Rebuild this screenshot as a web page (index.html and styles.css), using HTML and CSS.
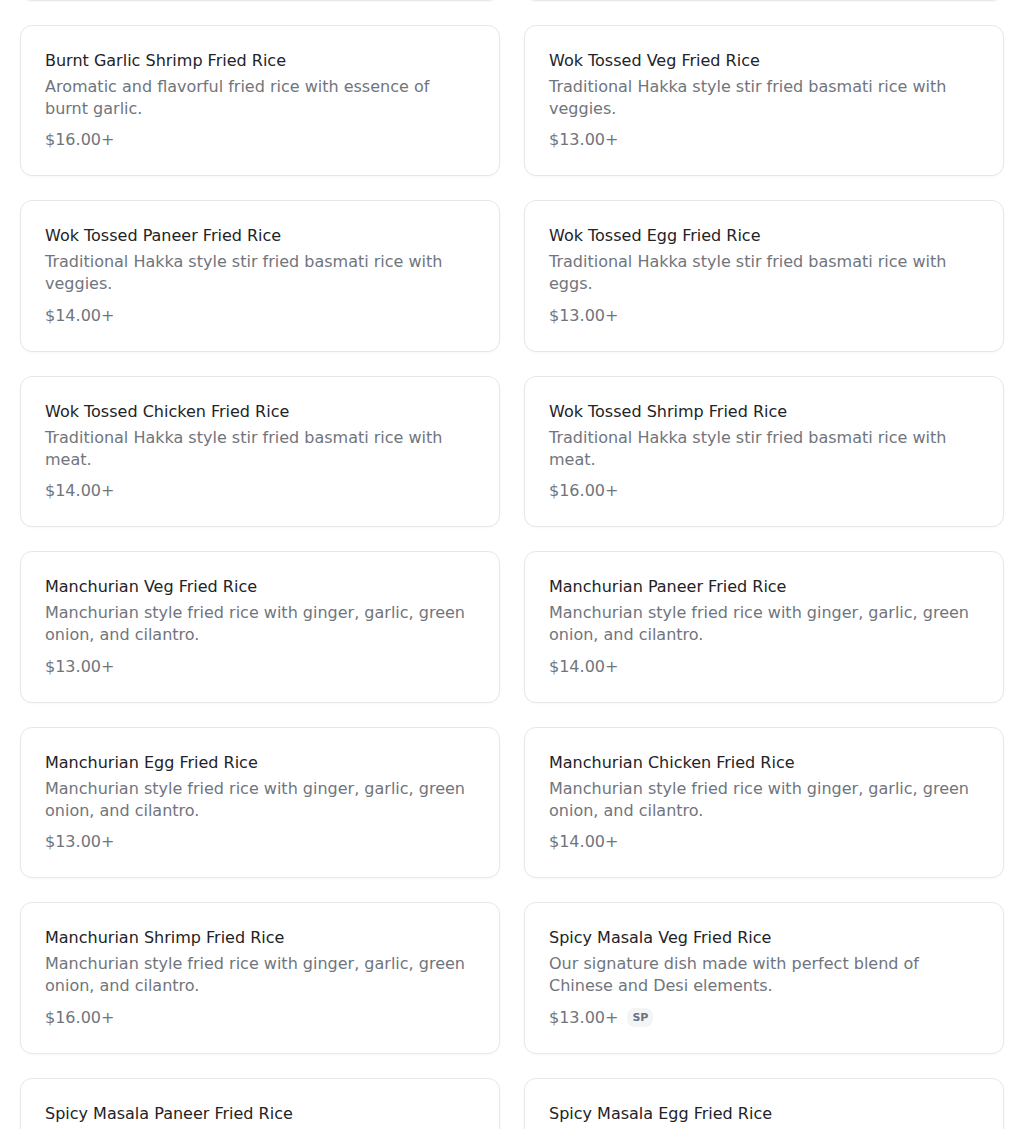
FILE: index.html
```html
<!DOCTYPE html>
<html lang="en">
<head>
<meta charset="utf-8">
<title>Fried Rice</title>
<link rel="stylesheet" href="styles.css">
</head>
<body>
<main class="menu">
  <div class="grid">
    <div class="card"><h3 class="name">Burnt Garlic Chicken Fried Rice</h3><p class="desc">Aromatic and flavorful fried rice with essence of burnt garlic.</p><div class="price-row"><span class="price">$14.00+</span></div></div>
    <div class="card"><h3 class="name">Burnt Garlic Egg Fried Rice</h3><p class="desc">Aromatic and flavorful fried rice with essence of burnt garlic.</p><div class="price-row"><span class="price">$13.00+</span></div></div>

    <div class="card"><h3 class="name">Burnt Garlic Shrimp Fried Rice</h3><p class="desc">Aromatic and flavorful fried rice with essence of burnt garlic.</p><div class="price-row"><span class="price">$16.00+</span></div></div>
    <div class="card"><h3 class="name">Wok Tossed Veg Fried Rice</h3><p class="desc">Traditional Hakka style stir fried basmati rice with veggies.</p><div class="price-row"><span class="price">$13.00+</span></div></div>

    <div class="card"><h3 class="name">Wok Tossed Paneer Fried Rice</h3><p class="desc">Traditional Hakka style stir fried basmati rice with veggies.</p><div class="price-row"><span class="price">$14.00+</span></div></div>
    <div class="card"><h3 class="name">Wok Tossed Egg Fried Rice</h3><p class="desc">Traditional Hakka style stir fried basmati rice with eggs.</p><div class="price-row"><span class="price">$13.00+</span></div></div>

    <div class="card"><h3 class="name">Wok Tossed Chicken Fried Rice</h3><p class="desc">Traditional Hakka style stir fried basmati rice with meat.</p><div class="price-row"><span class="price">$14.00+</span></div></div>
    <div class="card"><h3 class="name">Wok Tossed Shrimp Fried Rice</h3><p class="desc">Traditional Hakka style stir fried basmati rice with meat.</p><div class="price-row"><span class="price">$16.00+</span></div></div>

    <div class="card"><h3 class="name">Manchurian Veg Fried Rice</h3><p class="desc">Manchurian style fried rice with ginger, garlic, green onion, and cilantro.</p><div class="price-row"><span class="price">$13.00+</span></div></div>
    <div class="card"><h3 class="name">Manchurian Paneer Fried Rice</h3><p class="desc">Manchurian style fried rice with ginger, garlic, green onion, and cilantro.</p><div class="price-row"><span class="price">$14.00+</span></div></div>

    <div class="card"><h3 class="name">Manchurian Egg Fried Rice</h3><p class="desc">Manchurian style fried rice with ginger, garlic, green onion, and cilantro.</p><div class="price-row"><span class="price">$13.00+</span></div></div>
    <div class="card"><h3 class="name">Manchurian Chicken Fried Rice</h3><p class="desc">Manchurian style fried rice with ginger, garlic, green onion, and cilantro.</p><div class="price-row"><span class="price">$14.00+</span></div></div>

    <div class="card"><h3 class="name">Manchurian Shrimp Fried Rice</h3><p class="desc">Manchurian style fried rice with ginger, garlic, green onion, and cilantro.</p><div class="price-row"><span class="price">$16.00+</span></div></div>
    <div class="card"><h3 class="name">Spicy Masala Veg Fried Rice</h3><p class="desc">Our signature dish made with perfect blend of Chinese and Desi elements.</p><div class="price-row"><span class="price">$13.00+</span><span class="badge">SP</span></div></div>

    <div class="card"><h3 class="name">Spicy Masala Paneer Fried Rice</h3><p class="desc">Our signature dish made with perfect blend of Chinese and Desi elements.</p><div class="price-row"><span class="price">$14.00+</span><span class="badge">SP</span></div></div>
    <div class="card"><h3 class="name">Spicy Masala Egg Fried Rice</h3><p class="desc">Our signature dish made with perfect blend of Chinese and Desi elements.</p><div class="price-row"><span class="price">$13.00+</span><span class="badge">SP</span></div></div>
  </div>
</main>
</body>
</html>
```
FILE: styles.css
```css
html, body {
  margin: 0;
  padding: 0;
  background: #ffffff;
  font-family: "DejaVu Sans", "Noto Sans", sans-serif;
}

.menu {
  padding: 0 20px;
  margin-top: -150.75px;
}

.grid {
  display: grid;
  grid-template-columns: 1fr 1fr;
  column-gap: 24px;
  row-gap: 24px;
}

.card {
  border: 1px solid #e5e7eb;
  border-radius: 12px;
  padding: 24px 24px 23px;
  background: #fff;
  box-shadow: 0 1px 2px rgba(0, 0, 0, 0.03);
}

.name {
  margin: 0;
  font-size: 16px;
  line-height: 22px;
  font-weight: 400;
  color: #222327;
}

.desc {
  margin: 4px 0 0;
  font-size: 16px;
  line-height: 22px;
  color: #70757d;
}

.price-row {
  display: flex;
  align-items: center;
  margin-top: 8.5px;
  height: 24px;
}

.price {
  font-size: 16px;
  line-height: 24px;
  color: #70757d;
}

.badge {
  margin-left: 9px;
  padding: 2px 5px;
  border-radius: 8px;
  background: #f3f4f6;
  color: #6b7280;
  font-size: 11px;
  font-weight: 700;
  line-height: 15px;
}
```
